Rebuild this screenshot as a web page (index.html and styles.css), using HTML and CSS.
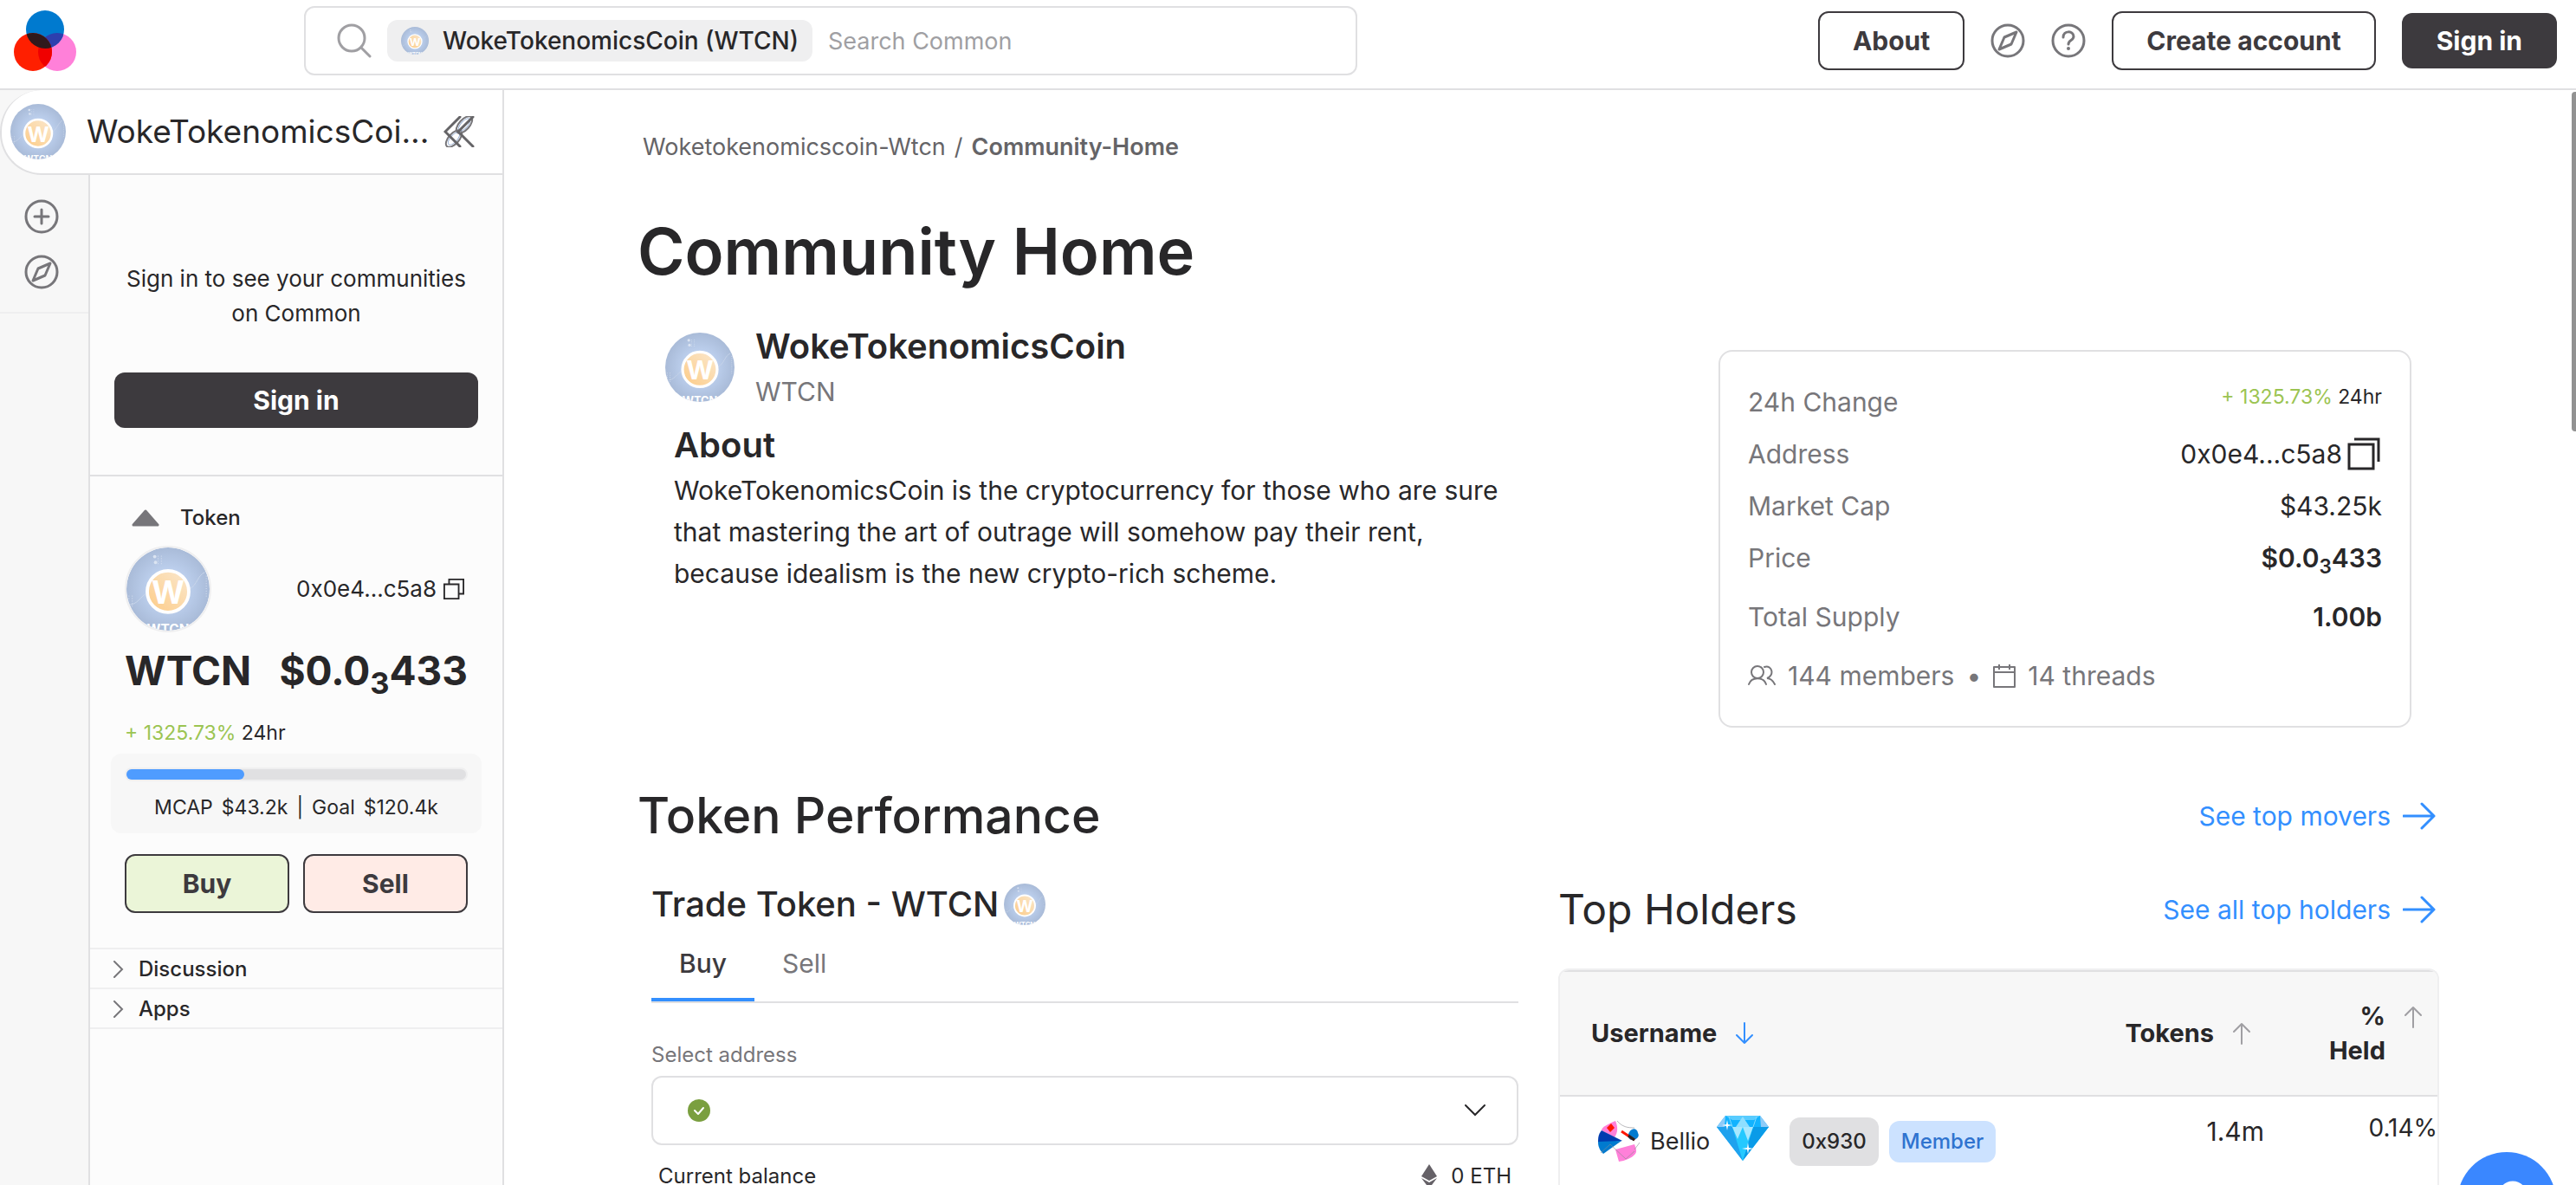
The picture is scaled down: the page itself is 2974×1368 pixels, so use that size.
FILE: index.html
```html
<!DOCTYPE html>
<html lang="en">
<head>
  <meta charset="UTF-8">
  <meta name="viewport" content="width=device-width, initial-scale=1.0">
  <title>WokeTokenomicsCoin - Community Home</title>
  <link rel="stylesheet" href="styles.css">
</head>
<body>
  <!-- Shared icons -->
  <svg class="sprite" aria-hidden="true">
    <defs>
      <radialGradient id="coinGlow">
        <stop offset="0.45" stop-color="#bdd0ee"/>
        <stop offset="1" stop-color="#a9bbd8"/>
      </radialGradient>
      <linearGradient id="coinGold" x1="0" y1="1" x2="1" y2="0">
        <stop offset="0" stop-color="#fdcb85"/>
        <stop offset="1" stop-color="#fae8cf"/>
      </linearGradient>
      <clipPath id="coinClip"><circle cx="50" cy="50" r="50"/></clipPath>
    </defs>
    <symbol id="coin" viewBox="0 0 100 100">
      <g clip-path="url(#coinClip)">
        <rect width="100" height="100" fill="url(#coinGlow)"/>
        <path d="M2 69c12 0 14-10 24-15M76 50c9-5 10-17 18-20" fill="none" stroke="#c9d6ea"/>
        <circle cx="34" cy="11" r="2" fill="#dbe4f2"/>
        <circle cx="35" cy="18" r="2" fill="#dbe4f2"/>
        <path d="M38 10v10M42 10v10M3 58v14M7 58v14M96 34v26" stroke="#dbe4f2" stroke-width="1" stroke-dasharray="1 2"/>
        <circle cx="50" cy="53" r="25" fill="url(#coinGold)" stroke="#fff" stroke-width="4"/>
        <text x="50" y="68" text-anchor="middle" class="coin-letter">W</text>
        <text x="50" y="104" text-anchor="middle" class="coin-name">WTCN</text>
      </g>
    </symbol>
    <symbol id="compass" viewBox="0 0 40 40">
      <g fill="none" stroke="currentColor" stroke-width="3" stroke-linejoin="round">
        <circle cx="20" cy="20" r="18"/>
        <path d="M30 10l-6 14-14 6 6-14z"/>
      </g>
    </symbol>
    <symbol id="arrow-right" viewBox="0 0 38 32">
      <path d="M1 16h35M22 2l14 14-14 14" fill="none" stroke="currentColor" stroke-width="3" stroke-linecap="round" stroke-linejoin="round"/>
    </symbol>
    <symbol id="arrow-up" viewBox="0 0 20 26">
      <path d="M10 25V2M1 11l9-9 9 9" fill="none" stroke="currentColor" stroke-width="2" stroke-linecap="round" stroke-linejoin="round"/>
    </symbol>
    <symbol id="chevron" viewBox="0 0 14 20">
      <path d="M2 1l9 9-9 9" fill="none" stroke="currentColor" stroke-width="2" stroke-linecap="round"/>
    </symbol>
  </svg>

  <header class="header">
    <a href="#" class="logo" aria-label="Common">
      <svg width="72" height="70" viewBox="0 0 72 70">
        <clipPath id="blueClip"><circle cx="36" cy="22" r="22"/></clipPath>
        <clipPath id="redClip"><circle cx="22" cy="48" r="22"/></clipPath>
        <circle cx="50" cy="48" r="22" fill="#ff80d9"/>
        <circle cx="36" cy="22" r="22" fill="#007acf"/>
        <circle cx="22" cy="48" r="22" fill="#ff1f00"/>
        <circle cx="50" cy="48" r="22" fill="#2d3fae" clip-path="url(#blueClip)"/>
        <g clip-path="url(#redClip)">
          <circle cx="50" cy="48" r="22" fill="#f00000"/>
          <circle cx="36" cy="22" r="22" fill="#30191c"/>
        </g>
      </svg>
    </a>
    <form class="search">
      <svg class="search-icon" width="40" height="40" viewBox="0 0 40 40">
        <g fill="none" stroke="#a09fa3" stroke-width="3" stroke-linecap="round">
          <circle cx="17" cy="17" r="15"/>
          <path d="M28 28l10 10"/>
        </g>
      </svg>
      <span class="search-chip">
        <svg width="32" height="32"><use href="#coin"/></svg>
        WokeTokenomicsCoin (WTCN)
      </span>
      <input type="text" class="search-input" placeholder="Search Common" aria-label="Search Common">
    </form>
    <div class="header-actions">
      <button class="btn outline-btn">About</button>
      <button class="icon-btn" aria-label="Explore"><svg width="40" height="40"><use href="#compass"/></svg></button>
      <button class="icon-btn" aria-label="Help">
        <svg width="40" height="40" viewBox="0 0 40 40">
          <circle cx="20" cy="20" r="18" fill="none" stroke="currentColor" stroke-width="3"/>
          <path d="M14 16c0-8 12-8 12-1 0 5-6 4-6 9" fill="none" stroke="currentColor" stroke-width="3" stroke-linecap="round"/>
          <circle cx="20" cy="29" r="2" fill="currentColor"/>
        </svg>
      </button>
      <button class="btn outline-btn">Create account</button>
      <button class="btn primary-btn">Sign in</button>
    </div>
  </header>

  <div class="layout">
    <aside class="sidebar">
      <div class="community-bar">
        <svg width="64" height="64"><use href="#coin"/></svg>
        <span class="community-name">WokeTokenomicsCoi...</span>
        <button class="icon-btn collapse" aria-label="Collapse sidebar">
          <svg width="36" height="36" viewBox="0 0 36 36" fill="none" stroke-linecap="round">
            <g stroke="#77767a" stroke-width="2">
              <ellipse cx="24" cy="10" rx="12" ry="6" transform="rotate(-48 24 10)"/>
              <ellipse cx="12" cy="26" rx="12" ry="6" transform="rotate(-48 12 26)"/>
            </g>
            <g stroke="#9db4d6" stroke-width="1">
              <ellipse cx="24" cy="10" rx="9" ry="4" transform="rotate(-48 24 10)"/>
              <ellipse cx="12" cy="26" rx="9" ry="4" transform="rotate(-48 12 26)"/>
            </g>
            <path d="M19 1L2 18l17 17M34 1L17 18l17 17" stroke="#656467" stroke-width="3"/>
          </svg>
        </button>
      </div>
      <div class="sidebar-body">
        <nav class="rail">
          <div class="rail-group">
            <button class="icon-btn" aria-label="Create community">
              <svg width="40" height="40" viewBox="0 0 40 40">
                <g fill="none" stroke="currentColor" stroke-width="3" stroke-linecap="round">
                  <circle cx="20" cy="20" r="18"/>
                  <path d="M12 20h16M20 12v16"/>
                </g>
              </svg>
            </button>
            <button class="icon-btn" aria-label="Explore"><svg width="40" height="40"><use href="#compass"/></svg></button>
          </div>
        </nav>
        <div class="panel">
          <div class="signin-box">
            <p>Sign in to see your communities on Common</p>
            <button class="btn primary-btn">Sign in</button>
          </div>
          <div class="token-box">
            <div class="token-toggle">
              <svg width="32" height="20" viewBox="0 0 32 20"><path d="M16 2L30 18H2z" fill="#77767a" stroke="#77767a" stroke-width="3" stroke-linejoin="round"/></svg>
              Token
            </div>
            <div class="token-row">
              <svg class="token-avatar" width="96" height="96"><use href="#coin"/></svg>
              <span class="token-address">
                0x0e4...c5a8
                <svg width="24" height="24" viewBox="0 0 26 26"><path d="M1 7h18v18H1zM7 7V1h18v18h-6" fill="none" stroke="#282729" stroke-width="2"/></svg>
              </span>
            </div>
            <div class="token-price"><span>WTCN</span><span>$0.0<small>3</small>433</span></div>
            <p class="change"><span class="up">+ 1325.73%</span> 24hr</p>
            <div class="mcap">
              <div class="mcap-track"><div class="mcap-fill" style="width: 35%"></div></div>
              <p><span>MCAP</span><span>$43.2k</span><span>|</span><span>Goal</span><span>$120.4k</span></p>
            </div>
            <div class="token-actions">
              <button class="btn outline-btn buy">Buy</button>
              <button class="btn outline-btn sell">Sell</button>
            </div>
          </div>
          <a href="#" class="panel-link"><svg width="14" height="20"><use href="#chevron"/></svg>Discussion</a>
          <a href="#" class="panel-link"><svg width="14" height="20"><use href="#chevron"/></svg>Apps</a>
        </div>
      </div>
    </aside>

    <main class="content">
      <nav class="breadcrumb">
        <a href="#">Woketokenomicscoin-Wtcn</a><span>/</span><a href="#" class="current">Community-Home</a>
      </nav>
      <h1>Community Home</h1>

      <section class="intro">
        <div class="intro-text">
          <div class="intro-head">
            <svg width="80" height="80"><use href="#coin"/></svg>
            <div>
              <h2>WokeTokenomicsCoin</h2>
              <p class="symbol">WTCN</p>
            </div>
          </div>
          <div class="about">
            <h2>About</h2>
            <p>WokeTokenomicsCoin is the cryptocurrency for those who are sure that mastering the art of outrage will somehow pay their rent, because idealism is the new crypto-rich scheme.</p>
          </div>
        </div>
        <div class="stats">
          <div class="stat"><span>24h Change</span><span class="change"><span class="up">+ 1325.73%</span> 24hr</span></div>
          <div class="stat"><span>Address</span>
            <span class="value address">0x0e4...c5a8
              <svg width="40" height="38" viewBox="0 0 40 38"><path d="M2 8h28v28H2zM8 2h28v26" fill="none" stroke="#282729" stroke-width="3"/></svg>
            </span>
          </div>
          <div class="stat"><span>Market Cap</span><span class="value">$43.25k</span></div>
          <div class="stat"><span>Price</span><span class="value strong">$0.0<small>3</small>433</span></div>
          <div class="stat supply"><span>Total Supply</span><span class="value strong">1.00b</span></div>
          <div class="counts">
            <svg width="32" height="24" viewBox="0 0 32 24"><g fill="none" stroke="#77767a" stroke-width="2" stroke-linecap="round"><circle cx="11" cy="8" r="7"/><path d="M1 22c3-9 17-9 20 0M19 2c9-3 12 10 3 13 4 0 7 3 9 7"/></g></svg>
            <span>144 members</span><span>•</span>
            <svg width="26" height="28" viewBox="0 0 26 28"><path d="M1 4h24v23H1zM1 10h24M7 1v6M19 1v6" fill="none" stroke="#77767a" stroke-width="2" stroke-linejoin="round"/></svg>
            <span>14 threads</span>
          </div>
        </div>
      </section>

      <div class="section-head">
        <h2>Token Performance</h2>
        <a href="#" class="see-link">See top movers <svg width="38" height="32"><use href="#arrow-right"/></svg></a>
      </div>

      <div class="columns">
        <section class="trade">
          <h3>Trade Token - WTCN <svg width="48" height="48"><use href="#coin"/></svg></h3>
          <div class="tabs">
            <button class="tab active">Buy</button>
            <button class="tab">Sell</button>
          </div>
          <label for="address">Select address</label>
          <div class="select-box">
            <svg width="26" height="26" viewBox="0 0 26 26"><circle cx="13" cy="13" r="13" fill="#7a9f3f"/><path d="M8 13l4 4 6-7" fill="none" stroke="#fff" stroke-width="2" stroke-linecap="round" stroke-linejoin="round"/></svg>
            <select id="address"><option value=""></option></select>
            <svg width="24" height="14" viewBox="0 0 24 14"><path d="M1 1l11 11L23 1" fill="none" stroke="#282729" stroke-width="2" stroke-linecap="round"/></svg>
          </div>
          <div class="balance">
            <span>Current balance</span>
            <span class="eth">
              <svg width="18" height="28" viewBox="0 0 18 28"><path d="M9 0l9 14-9 5-9-5z" fill="#656167"/><path d="M0 16l9 5 9-5-9 12z" fill="#656167"/></svg>
              0 ETH
            </span>
          </div>
        </section>

        <section class="holders">
          <div class="holders-head">
            <h3>Top Holders</h3>
            <a href="#" class="see-link">See all top holders <svg width="38" height="32"><use href="#arrow-right"/></svg></a>
          </div>
          <div class="table-wrapper">
            <table>
              <thead>
                <tr>
                  <th class="user"><div>Username <svg class="sort down" width="20" height="26"><use href="#arrow-up"/></svg></div></th>
                  <th class="tokens"><div>Tokens <svg class="sort" width="20" height="26"><use href="#arrow-up"/></svg></div></th>
                  <th class="held"><div><span>%<br>Held</span> <svg class="sort" width="20" height="26"><use href="#arrow-up"/></svg></div></th>
                </tr>
              </thead>
              <tbody>
                <tr>
                  <td class="user">
                    <div>
                      <svg width="48" height="48" viewBox="0 0 48 48">
                        <path d="M20 0C8 5 4 8 4 11l15 8c4-6 4-12 1-19z" fill="#ff80d9"/>
                        <path d="M10 8l5-5 4 5-5 5z" fill="#ff1500"/>
                        <path d="M4 11C0 16 0 20 0 25h12l16-2z" fill="#003caf"/>
                        <path d="M0 24l27-1L6 38C2 34 0 30 0 24z" fill="#007acf"/>
                        <path d="M20 33l22-6c2 6 3 8 1 11-4 5-12 8-19 9z" fill="#ff80d9"/>
                        <path d="M36 13c3-5 9-5 10 1 3 5-4 9-8 8-4-2-4-6-2-9z" fill="#007acf"/>
                        <path d="M27 12l15 10" stroke="#ff1500" stroke-width="3"/>
                        <path d="M35 17l7 5" stroke="#222" stroke-width="3"/>
                        <path d="M22 0c6 7 12 8 20 8M42 33l6-8M14 27l18 17 10-9M3 37l11-10" fill="none" stroke="#8a8a90" stroke-opacity="0.6"/>
                      </svg>
                      <a href="#" class="user-name">Bellio</a>
                      <svg class="gem" width="60" height="52" viewBox="0 0 60 52">
                        <path d="M10 0h40l10 13-30 39L0 13z" fill="#12b3ff"/>
                        <path d="M10 0h40l-7 5H18z" fill="#58ccff"/>
                        <path d="M0 13h18l12 39z" fill="#1fa2ee"/>
                        <path d="M42 13h18L30 52z" fill="#0a9be8"/>
                        <path d="M18 13h24L30 52z" fill="#25c9ff"/>
                        <path d="M18 13h12l-6 14zM30 13h12l-6 16z" fill="#a8e8ff"/>
                        <path d="M30 1l-8 12h16z" fill="#8fdfff"/>
                        <path d="M10 0L0 13h9zM50 0l10 13h-9z" fill="#8ecbf8"/>
                        <path d="M18 13L14 1M42 13l4-12" stroke="#7cd9ff"/>
                        <path d="M12 5l1 5 5 1-5 1-1 5-1-5-5-1 5-1zM36 31l1 6 6 1-6 1-1 5-1-5-6-1 6-1z" fill="#fff"/>
                      </svg>
                      <span class="tag address-tag">0x930</span>
                      <span class="tag member-tag">Member</span>
                    </div>
                  </td>
                  <td class="tokens">1.4m</td>
                  <td class="held">0.14%</td>
                </tr>
              </tbody>
            </table>
          </div>
        </section>
      </div>
    </main>
    <div class="scroll-thumb"></div>
  </div>

  <button class="chat-btn" aria-label="Open help">
    <svg width="114" height="114" viewBox="0 0 114 114"><path d="M52 50a12 12 0 0 1 24 0c0 12-13 14-13 26" fill="none" stroke="#fff" stroke-width="9"/><circle cx="63" cy="88" r="6" fill="#fff"/></svg>
  </button>
</body>
</html>
```

FILE: styles.css
```css
/* Base Styles */
* {
  box-sizing: border-box;
}

body {
  font-family: 'Inter', 'Liberation Sans', sans-serif;
  font-size: 30px;
  line-height: 48px;
  color: #282729;
  background-color: #fff;
  margin: 0;
  height: 100vh;
  display: flex;
  flex-direction: column;
  overflow: hidden;
}

h1, h2, h3, p {
  margin: 0;
}

a {
  color: inherit;
  text-decoration: none;
}

svg {
  flex: none;
  display: block;
}

button, input, select {
  font-family: inherit;
  color: inherit;
}

small {
  font-size: 75%;
  line-height: 0;
  vertical-align: sub;
}

.sprite {
  position: absolute;
  width: 0;
  height: 0;
}

.coin-letter {
  font-size: 38px;
  font-weight: 700;
  fill: #fff;
}

.coin-name {
  font-size: 16px;
  font-weight: 700;
  fill: #fff;
}

/* Buttons */
.btn {
  height: 64px;
  padding: 0 38px;
  border: none;
  border-radius: 12px;
  font-size: 30px;
  font-weight: 700;
  cursor: pointer;
}

.outline-btn {
  height: 68px;
  background-color: transparent;
  border: 2px solid #3d3a3e;
  color: #3d3a3e;
}

.primary-btn {
  padding: 0 40px;
  background-color: #3d3a3e;
  color: #fff;
}

.icon-btn {
  padding: 0;
  border: none;
  background: none;
  color: #77767a;
  cursor: pointer;
}

/* Header Section */
.header {
  flex: none;
  display: flex;
  align-items: center;
  height: 104px;
  padding: 0 22px 8px 16px;
  border-bottom: 2px solid #e0e0e2;
}

.logo {
  width: 335px;
}

.search {
  flex: 1;
  max-width: 1216px;
  height: 80px;
  display: flex;
  align-items: center;
  gap: 18px;
  padding: 0 36px;
  border: 2px solid #e0e0e2;
  border-radius: 12px;
}

.search-chip {
  display: flex;
  align-items: center;
  gap: 16px;
  height: 48px;
  padding: 0 16px;
  border-radius: 12px;
  background-color: #efeff0;
  font-size: 28px;
  font-weight: 500;
  white-space: nowrap;
}

.search-input {
  flex: 1;
  border: none;
  outline: none;
  padding: 0;
  font-size: 27px;
}

.search-input::placeholder {
  color: #a09fa3;
}

.header-actions {
  display: flex;
  align-items: center;
  gap: 30px;
  margin-left: auto;
}

/* Sidebar */
.layout {
  flex: 1;
  min-height: 0;
  display: flex;
  position: relative;
  overflow: hidden;
}

.sidebar {
  flex: none;
  width: 582px;
  display: flex;
  flex-direction: column;
  background-color: #f7f7f7;
  border-right: 2px solid #e0e0e2;
}

.community-bar {
  display: flex;
  align-items: center;
  height: 98px;
  padding: 0 32px 0 10px;
  border-bottom: 2px solid #e0e0e2;
  border-left: 2px solid #e0e0e2;
  border-radius: 48px 0 0 48px;
  background-color: #fff;
}

.community-name {
  flex: 1;
  margin-left: 24px;
  font-size: 37px;
  white-space: nowrap;
}

.sidebar-body {
  flex: 1;
  min-height: 0;
  display: flex;
}

.rail {
  width: 104px;
  border-right: 2px solid #e0e0e2;
}

.rail-group {
  display: flex;
  flex-direction: column;
  align-items: center;
  gap: 24px;
  padding: 28px 6px 26px 0;
  border-bottom: 2px solid #efeff0;
}

.panel {
  flex: 1;
  background-color: #fcfcfc;
}

.signin-box {
  height: 348px;
  padding: 100px 28px 0;
  border-bottom: 2px solid #e0e0e2;
  text-align: center;
  font-size: 26px;
  line-height: 40px;
}

.signin-box .btn {
  width: 100%;
  margin-top: 48px;
}

.token-box {
  padding: 24px 40px 40px;
}

.token-toggle {
  display: flex;
  align-items: center;
  gap: 24px;
  padding-left: 8px;
  font-size: 24px;
  font-weight: 500;
}

.token-row {
  display: flex;
  align-items: center;
  justify-content: space-between;
  margin-top: 8px;
}

.token-avatar {
  box-sizing: content-box;
  border: 2px solid #efeff0;
  border-radius: 50%;
}

.token-address {
  display: flex;
  align-items: center;
  gap: 8px;
  padding-right: 4px;
  font-size: 26px;
}

.token-price {
  display: flex;
  justify-content: space-between;
  margin-top: 20px;
  font-size: 46px;
  font-weight: 700;
}

.change {
  font-size: 23px;
}

.up {
  color: #9bc452;
}

.token-box .change {
  margin-top: 24px;
}

.mcap {
  margin: 0 -16px;
  padding: 16px 16px 6px;
  border-radius: 12px;
  background-color: #f7f7f7;
  font-size: 23px;
}

.mcap-track {
  height: 16px;
  padding: 2px;
  border: 2px solid #efeff0;
  border-radius: 8px;
  background-color: #e0e0e2;
}

.mcap-fill {
  height: 12px;
  margin: -2px;
  border-radius: 6px;
  background-color: #4f9cff;
}

.mcap p {
  display: flex;
  justify-content: center;
  gap: 10px;
  margin-top: 6px;
}

.token-actions {
  display: flex;
  gap: 16px;
  margin-top: 24px;
}

.token-actions .btn {
  flex: 1;
}

.buy {
  background-color: #ebf5d8;
}

.sell {
  background-color: #ffebe6;
}

.panel-link {
  display: flex;
  align-items: center;
  gap: 16px;
  height: 46px;
  padding: 2px 26px 0;
  border-top: 2px solid #efeff0;
  font-size: 24px;
  font-weight: 500;
}

.panel-link:last-child {
  height: 48px;
  border-bottom: 2px solid #efeff0;
}

.panel-link svg {
  color: #77767a;
}

/* Main Content */
.content {
  flex: 1;
  min-width: 0;
  display: flex;
  flex-direction: column;
  padding: 42px 158px 0 154px;
}

.breadcrumb {
  display: flex;
  gap: 10px;
  padding-left: 6px;
  font-size: 27px;
  color: #656467;
}

.breadcrumb .current {
  font-weight: 600;
}

h1 {
  margin-top: 56px;
  font-size: 74px;
  font-weight: 600;
  line-height: 80px;
}

h2 {
  font-size: 40px;
  font-weight: 600;
  line-height: 56px;
}

.intro {
  display: flex;
  justify-content: space-between;
  align-items: flex-start;
  margin-top: 42px;
}

.intro-text {
  width: 1020px;
  padding-left: 32px;
}

.intro-head {
  display: flex;
  align-items: center;
  gap: 24px;
}

.symbol {
  color: #77767a;
}

.about {
  padding: 10px 0 0 10px;
}

.stats {
  width: 800px;
  margin: 32px 32px 0 0;
  padding: 28px 32px;
  border: 2px solid #e0e0e2;
  border-radius: 16px;
}

.stat {
  display: flex;
  justify-content: space-between;
  height: 60px;
  line-height: 60px;
  color: #77767a;
}

.stat .change {
  line-height: 48px;
  color: #282729;
}

.value {
  color: #282729;
}

.address {
  display: flex;
  align-items: center;
  gap: 6px;
}

.strong {
  font-weight: 600;
}

.supply {
  height: 76px;
  line-height: 76px;
}

.counts {
  display: flex;
  align-items: center;
  gap: 14px;
  height: 60px;
  color: #77767a;
}

/* Token Performance */
.section-head {
  display: flex;
  justify-content: space-between;
  align-items: center;
  margin-top: 66px;
}

.section-head h2 {
  font-size: 57px;
  font-weight: 500;
  line-height: 72px;
}

.see-link {
  display: flex;
  align-items: center;
  gap: 14px;
  padding-right: 4px;
  color: #338fff;
}

.columns {
  flex: 1;
  min-height: 0;
  display: grid;
  grid-template-columns: 1fr 1fr;
  gap: 46px;
  margin-top: 36px;
}

.trade {
  padding-left: 16px;
}

.trade h3 {
  display: flex;
  align-items: center;
  gap: 6px;
  height: 60px;
  font-size: 40px;
  font-weight: 500;
}

.tabs {
  display: flex;
  height: 84px;
  border-bottom: 2px solid #e0e0e2;
}

.tab {
  padding: 4px 32px 6px;
  border: none;
  border-bottom: 4px solid transparent;
  background: none;
  font-size: 30px;
  color: #77767a;
}

.tab.active {
  border-color: #338fff;
  font-weight: 500;
  color: #3d3a3e;
}

.trade label {
  display: block;
  margin-top: 36px;
  font-size: 24px;
  color: #77767a;
}

.select-box {
  display: flex;
  align-items: center;
  height: 80px;
  padding: 0 36px 0 40px;
  border: 2px solid #e0e0e2;
  border-radius: 12px;
}

.select-box select {
  flex: 1;
  height: 76px;
  border: none;
  outline: none;
  background: none;
  appearance: none;
  font-size: 24px;
}

.balance {
  display: flex;
  justify-content: space-between;
  padding: 12px 8px 0;
  font-size: 24px;
}

.eth {
  display: flex;
  align-items: center;
  gap: 16px;
}

/* Top Holders */
.holders {
  display: flex;
  flex-direction: column;
}

.holders-head {
  flex: none;
  display: flex;
  justify-content: space-between;
  align-items: center;
  height: 72px;
}

.holders-head h3 {
  font-size: 48px;
  font-weight: 400;
}

.table-wrapper {
  flex: 1;
  margin-top: 32px;
  border: 2px solid #efeff0;
  border-bottom: none;
  border-radius: 12px 12px 0 0;
  overflow: hidden;
}

table {
  width: 100%;
  border-collapse: collapse;
}

th {
  height: 144px;
  padding: 0;
  border-top: 2px solid #e0e0e2;
  border-bottom: 2px solid #e0e0e2;
  background-color: #f7f7f7;
  font-size: 29px;
  font-weight: 700;
  line-height: 40px;
  text-align: right;
}

th div {
  display: flex;
  align-items: center;
  justify-content: flex-end;
  gap: 22px;
}

.sort {
  color: #a09fa3;
}

.sort.down {
  color: #338fff;
  transform: rotate(180deg);
}

th.user div {
  justify-content: flex-start;
  padding-left: 36px;
}

th.tokens {
  padding-right: 16px;
}

th.held div {
  align-items: flex-start;
  padding-right: 18px;
}

th.held .sort {
  margin-top: 8px;
}

td {
  padding: 16px 0;
  vertical-align: top;
}

td.user div {
  display: flex;
  align-items: center;
  padding: 6px 0 0 44px;
}

td.tokens {
  text-align: right;
}

td.held {
  width: 200px;
  font-size: 28px;
  line-height: 40px;
  text-align: right;
}

.user-name {
  margin: 0 8px 0 12px;
  font-size: 27px;
}

.gem {
  margin-bottom: 8px;
}

.tag {
  padding: 0 14px;
  border-radius: 12px;
  font-size: 24px;
  font-weight: 500;
}

.address-tag {
  margin: 0 12px 0 24px;
  background-color: #e0e0e2;
  line-height: 56px;
}

.member-tag {
  background-color: #cce2ff;
  color: #2f73cf;
}

/* Floating elements */
.scroll-thumb {
  position: absolute;
  top: 2px;
  right: 0;
  width: 5px;
  height: 392px;
  border-radius: 4px 0 0 4px;
  background-color: #929292;
}

.chat-btn {
  position: fixed;
  right: 23px;
  bottom: -76px;
  width: 114px;
  height: 114px;
  padding: 0;
  border: none;
  border-radius: 50%;
  background-color: #3a87ff;
}
```
